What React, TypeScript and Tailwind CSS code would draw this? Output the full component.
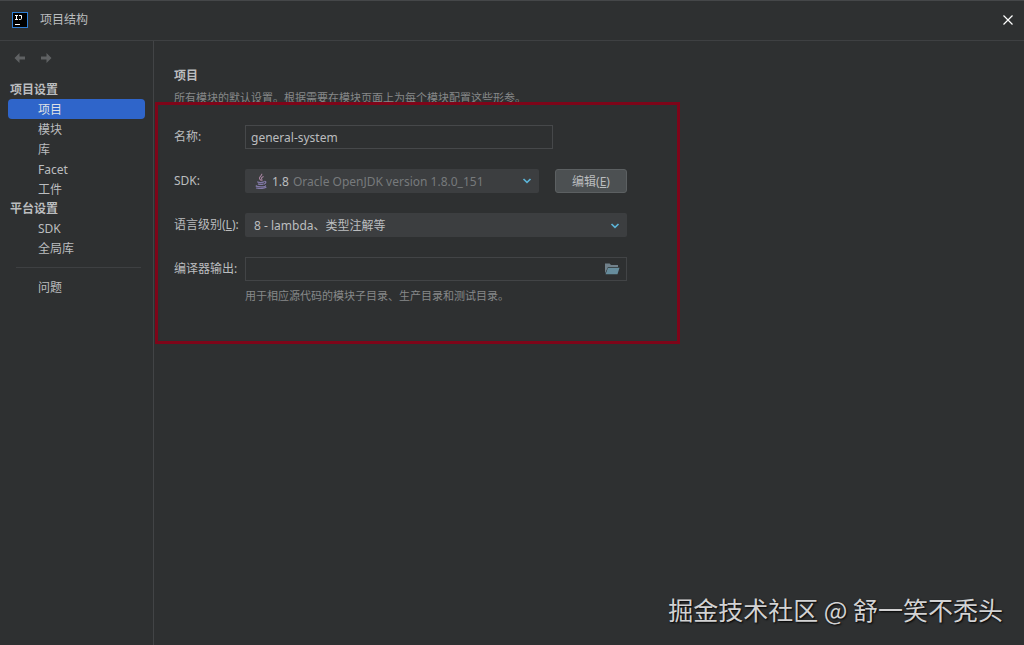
import { useState } from 'react'
import type { ReactNode } from 'react'

interface NavGroup {
  title: string
  items: string[]
}

const navGroups: NavGroup[] = [
  { title: '项目设置', items: ['项目', '模块', '库', 'Facet', '工件'] },
  { title: '平台设置', items: ['SDK', '全局库'] },
]

function AppLogo() {
  return (
    <svg width="16" height="16" viewBox="0 0 16 16" aria-hidden="true">
      <rect x="0.5" y="0.5" width="15" height="15" fill="#000" stroke="#2f7fd6" />
      <path d="M3 3.5h3M4.5 3.5v4M3 7.5h3M7 3.5h2.5v3q0 1-1.2 1H7" fill="none" stroke="#fff" strokeWidth="1" />
      <path d="M3 12.5h5" stroke="#fff" strokeWidth="1" />
    </svg>
  )
}

function ArrowIcon({ flip = false }: { flip?: boolean }) {
  return (
    <svg width="12" height="12" viewBox="0 0 12 12" className={flip ? 'rotate-180' : ''} aria-hidden="true">
      <path d="M0.5 6 5.5 1v3.6h5.5v2.8H5.5V11z" fill="#5f6163" />
    </svg>
  )
}

function ChevronIcon() {
  return (
    <svg width="10" height="6" viewBox="0 0 10 6" aria-hidden="true">
      <path d="M1.5 1 5 4.3 8.5 1" fill="none" stroke="#5cb3d6" strokeWidth="1.7" />
    </svg>
  )
}

function JavaIcon() {
  return (
    <svg width="16" height="16" viewBox="0 0 16 16" fill="none" aria-hidden="true">
      <path d="M8.7 0.8c1 1.6-2.8 2.8-2.2 4.6.2.8 1 1.4 1.4 2.2M10.6 3.4C8.8 4.2 8 5 8.8 6.2c.5.8.2 1.3-.2 1.7" stroke="#a5839f" strokeWidth="1.1" />
      <path d="M4.2 8.8c1.5.8 5 .8 7 .1M5 10.9c1.5.6 4 .6 5.6 0M11.3 8.5c2-.4 2.2 1.7-.2 2.6" stroke="#8279a8" strokeWidth="1.2" />
      <path d="M3.8 12.5c-2 .8 1 1.3 4.2 1.3 3 0 5.500-.4 4.200-1.200M3 15c3 .6 8 .4 10.400-.7" stroke="#8279a8" strokeWidth="1.2" />
    </svg>
  )
}

function FolderIcon() {
  return (
    <svg width="16" height="14" viewBox="0 0 16 14" aria-hidden="true">
      <path d="M1 11.500V1.500h4.600L7 3h7v2H4z" fill="#71818b" />
      <path d="M4 5.700h11.500L13.500 12.300H1.500z" fill="#668c9c" />
    </svg>
  )
}

interface FieldProps {
  id: string
  label: ReactNode
  children: ReactNode
}

function Field({ id, label, children }: FieldProps) {
  return (
    <div className="grid grid-cols-[71px_1fr]">
      <label htmlFor={id} className="h-6 leading-6 whitespace-nowrap">
        {label}
      </label>
      {children}
    </div>
  )
}

export default function App() {
  const [selected, setSelected] = useState('项目')
  const [name, setName] = useState('general-system')
  const [output, setOutput] = useState('')

  const itemClass = (item: string) =>
    `block w-full h-5 pt-px leading-5 pl-[30px] text-left rounded-[4px] ${selected === item ? 'bg-[#2f65ca] text-[#dfe1e5]' : ''}`

  return (
    <div className="relative flex flex-col min-h-screen bg-[#2e3031] border-t border-[#454749] text-[#bbbdbf] text-[12px] font-['Noto_Sans','Noto_Sans_CJK_SC',sans-serif]">
      {/* Title bar */}
      <header className="flex items-center h-10 pb-[2px] pl-3 pr-2 border-b border-[#3e4042]">
        <AppLogo />
        <h1 className="ml-3">项目结构</h1>
        <button aria-label="关闭" className="ml-auto p-[3px]">
          <svg width="10" height="10" viewBox="0 0 10 10" aria-hidden="true">
            <path d="M0.5 0.5 9.5 9.5M9.5 0.5 0.5 9.5" stroke="#fff" strokeWidth="1.2" />
          </svg>
        </button>
      </header>

      <div className="flex flex-1">
        {/* Sidebar */}
        <nav className="w-[154px] shrink-0 border-r border-[#424446] px-2">
          <div className="flex gap-[14px] px-[6px] pt-[11px] pb-4">
            <button aria-label="后退"><ArrowIcon /></button>
            <button aria-label="前进"><ArrowIcon flip /></button>
          </div>
          {navGroups.map((group) => (
            <div key={group.title}>
              <h2 className="h-[19px] leading-5 pl-[2px] font-bold">{group.title}</h2>
              {group.items.map((item) => (
                <button key={item} onClick={() => setSelected(item)} className={itemClass(item)}>
                  {item}
                </button>
              ))}
            </div>
          ))}
          <hr className="ml-2 mr-1 my-[9px] border-[#3e4042]" />
          <button onClick={() => setSelected('问题')} className={itemClass('问题')}>
            问题
          </button>
        </nav>

        {/* Project settings */}
        <main className="flex-1 min-w-0 pl-px pt-[25px]">
          <h2 className="pl-[19px] h-6 leading-5 font-bold">项目</h2>
          <p className="pl-[19px] h-4 leading-4 text-[11px] text-[#868889]">
            所有模块的默认设置。根据需要在模块页面上为每个模块配置这些形参。
          </p>
          <form
            onSubmit={(e) => e.preventDefault()}
            className="relative -mt-1 flex flex-col gap-5 max-w-[525px] bg-[#2e3031] border-3 border-[#7e0519] pt-5 pl-4 pr-[50px] pb-[37px]"
          >
            <Field id="name" label="名称:">
              <input
                id="name"
                value={name}
                onChange={(e) => setName(e.target.value)}
                className="w-[308px] h-6 px-[5px] border border-[#46484a] outline-none"
              />
            </Field>

            <Field id="sdk" label="SDK:">
              <div className="flex gap-4">
                <div className="relative flex-1">
                  <select id="sdk" className="appearance-none w-full h-6 pt-[2px] pl-[27px] bg-[#3c3e40] rounded-[2px] outline-none">
                    <option>1.8</option>
                  </select>
                  <div className="absolute inset-0 flex items-center pl-2 pr-[7px] pointer-events-none">
                    <JavaIcon />
                    <span className="ml-6 pt-[2px] flex-1 text-[#777a7c]">Oracle OpenJDK version 1.8.0_151</span>
                    <ChevronIcon />
                  </div>
                </div>
                <button className="w-[72px] h-6 pt-[2px] bg-[#4c5052] border border-[#5c6062] rounded-[3px]">
                  编辑(<u>E</u>)
                </button>
              </div>
            </Field>

            <Field id="level" label={<>语言级别(<u>L</u>):</>}>
              <div className="relative">
                <select id="level" className="appearance-none w-full h-6 pt-[2px] pl-[9px] bg-[#3c3e40] rounded-[2px] outline-none">
                  <option>8 - lambda、类型注解等</option>
                </select>
                <div className="absolute inset-0 flex items-center justify-end pt-[2px] pr-[7px] pointer-events-none">
                  <ChevronIcon />
                </div>
              </div>
            </Field>

            <Field id="output" label="编译器输出:">
              <div>
                <div className="flex items-center h-6 pl-[5px] pr-[6px] border border-[#424446]">
                  <input
                    id="output"
                    value={output}
                    onChange={(e) => setOutput(e.target.value)}
                    className="flex-1 min-w-0 outline-none"
                  />
                  <button aria-label="浏览"><FolderIcon /></button>
                </div>
                <p className="mt-[7px] h-4 leading-4 text-[11px] text-[#868889]">
                  用于相应源代码的模块子目录、生产目录和测试目录。
                </p>
              </div>
            </Field>
          </form>
        </main>
      </div>

      {/* Watermark */}
      <p className="absolute right-[21px] bottom-[18px] text-[25px] leading-9 text-[#d2d2d3] text-shadow-[1px_1px_2px_#000] font-['Noto_Sans_CJK_SC',sans-serif] pointer-events-none">
        掘金技术社区 @ 舒一笑不秃头
      </p>
    </div>
  )
}
